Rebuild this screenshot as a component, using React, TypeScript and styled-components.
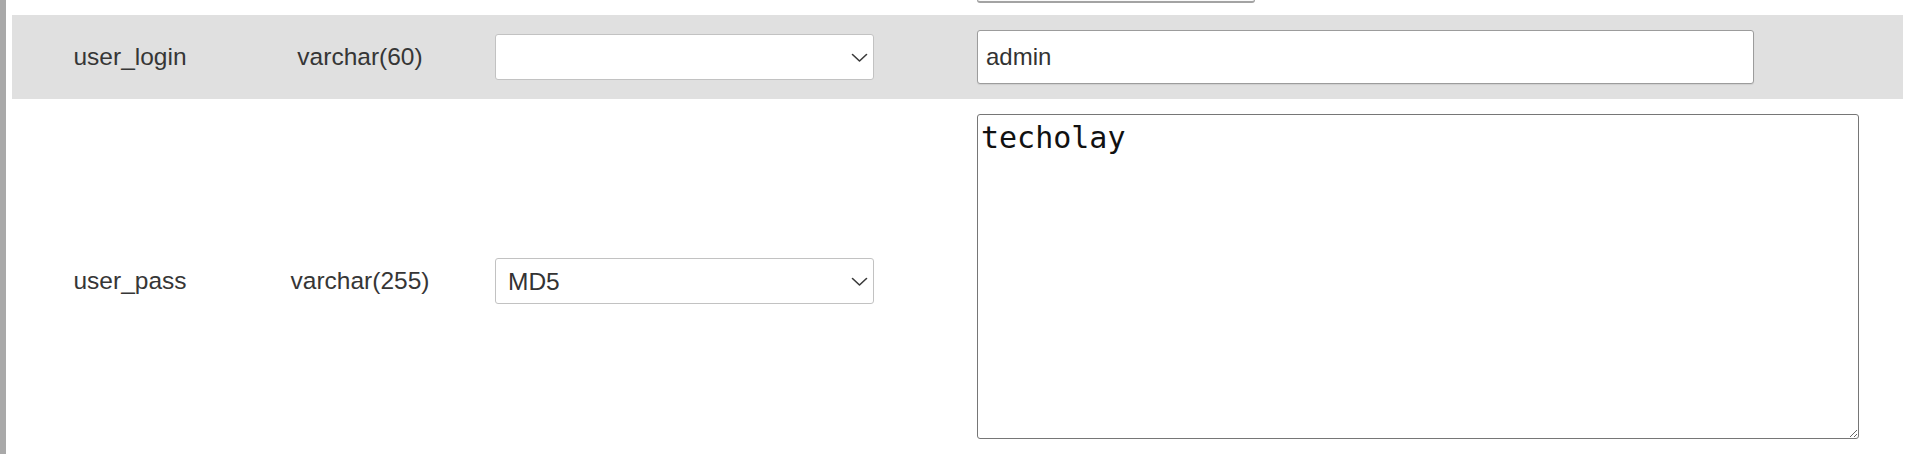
import React from 'react';
import styled, { createGlobalStyle } from 'styled-components';

const GlobalStyle = createGlobalStyle`
  html, body {
    margin: 0;
    padding: 0;
    background: #ffffff;
  }
  body {
    font-family: "Liberation Sans", Arial, Helvetica, sans-serif;
    color: #3a3a3a;
  }
`;

const Page = styled.div`
  display: flex;
  height: 454px;
  overflow: hidden;
`;

const Rail = styled.div`
  flex: none;
  width: 6px;
  background: #a9a9a9;
`;

const Form = styled.div`
  flex: 1;
  display: flex;
  flex-direction: column;
  padding: 0 17px 0 6px;
`;

const Row = styled.div<{ $shaded?: boolean }>`
  flex: none;
  display: flex;
  align-items: center;
  background: ${(p) => (p.$shaded ? '#e0e0e0' : 'transparent')};
  padding: 15px 0;
`;

const StubRow = styled.div`
  flex: none;
  display: flex;
  align-items: flex-start;
  height: 15px;
`;

const NameCell = styled.div`
  flex: none;
  width: 236px;
  text-align: center;
  font-size: 24.5px;
  color: #363636;
`;

const TypeCell = styled.div`
  flex: none;
  width: 224px;
  text-align: center;
  font-size: 24.5px;
  color: #363636;
`;

const FuncCell = styled.div`
  flex: none;
  width: 482px;
  padding-left: 23px;
`;

const ValueCell = styled.div<{ $top?: boolean }>`
  flex: 1;
  display: flex;
  align-self: ${(p) => (p.$top ? 'flex-start' : 'center')};
`;

const StubField = styled.div`
  width: 278px;
  height: 3px;
  box-sizing: border-box;
  border: 1px solid #a3a3a3;
  border-top: none;
  border-bottom-width: 2px;
  border-radius: 0 0 3px 3px;
  background: #fafafa;
`;

const SelectWrap = styled.div`
  position: relative;
  width: 379px;
  height: 46px;
`;

const Select = styled.select`
  appearance: none;
  width: 100%;
  height: 100%;
  box-sizing: border-box;
  border: 1px solid #c2c2c2;
  border-radius: 3px;
  background: #ffffff;
  padding: 0 30px 0 12px;
  font-family: "Liberation Sans", Arial, sans-serif;
  font-size: 24.5px;
  color: #333333;
  outline: none;
`;

const Chevron = styled.svg`
  position: absolute;
  right: 6px;
  top: 50%;
  width: 17px;
  height: 10px;
  margin-top: -4px;
  pointer-events: none;
`;

const TextField = styled.input`
  width: 777px;
  height: 54px;
  box-sizing: border-box;
  border: 1px solid #9c9c9c;
  border-radius: 3px;
  background: #ffffff;
  padding: 0 8px;
  font-family: "Liberation Sans", Arial, sans-serif;
  font-size: 24px;
  color: #333333;
  outline: none;
  box-shadow: 0 1px 1px rgba(0, 0, 0, 0.08);
`;

const TextArea = styled.textarea`
  width: 882px;
  height: 325px;
  margin-bottom: 9px;
  box-sizing: border-box;
  border: 1px solid #767676;
  border-radius: 3px;
  background: #ffffff;
  padding: 5px 3px 2px;
  font-family: "DejaVu Sans Mono", "Liberation Mono", monospace;
  font-size: 30px;
  color: #111111;
  outline: none;
`;

type FuncSelectProps = { value: string; options: string[] };

function FuncSelect({ value, options }: FuncSelectProps) {
  return (
    <SelectWrap>
      <Select defaultValue={value}>
        {options.map((o) => (
          <option key={o} value={o}>
            {o}
          </option>
        ))}
      </Select>
      <Chevron viewBox="0 0 17 10" fill="none">
        <path d="M1.5 1.5 L8.5 8 L15.5 1.5" stroke="#3a3a3a" strokeWidth="1.6" strokeLinecap="round" strokeLinejoin="round" />
      </Chevron>
    </SelectWrap>
  );
}

const FUNCTIONS = ['', 'AES_DECRYPT', 'AES_ENCRYPT', 'BIN', 'CHAR', 'MD5', 'PASSWORD', 'SHA1', 'UUID'];

export default function App() {
  return (
    <>
      <GlobalStyle />
      <Page>
        <Rail />
        <Form>
          <StubRow>
            <NameCell />
            <TypeCell />
            <FuncCell />
            <ValueCell $top>
              <StubField />
            </ValueCell>
          </StubRow>
          <Row $shaded>
            <NameCell>user_login</NameCell>
            <TypeCell>varchar(60)</TypeCell>
            <FuncCell>
              <FuncSelect value="" options={FUNCTIONS} />
            </FuncCell>
            <ValueCell>
              <TextField defaultValue="admin" />
            </ValueCell>
          </Row>
          <Row>
            <NameCell>user_pass</NameCell>
            <TypeCell>varchar(255)</TypeCell>
            <FuncCell>
              <FuncSelect value="MD5" options={FUNCTIONS} />
            </FuncCell>
            <ValueCell>
              <TextArea defaultValue="techolay" spellCheck={false} />
            </ValueCell>
          </Row>
        </Form>
      </Page>
    </>
  );
}
